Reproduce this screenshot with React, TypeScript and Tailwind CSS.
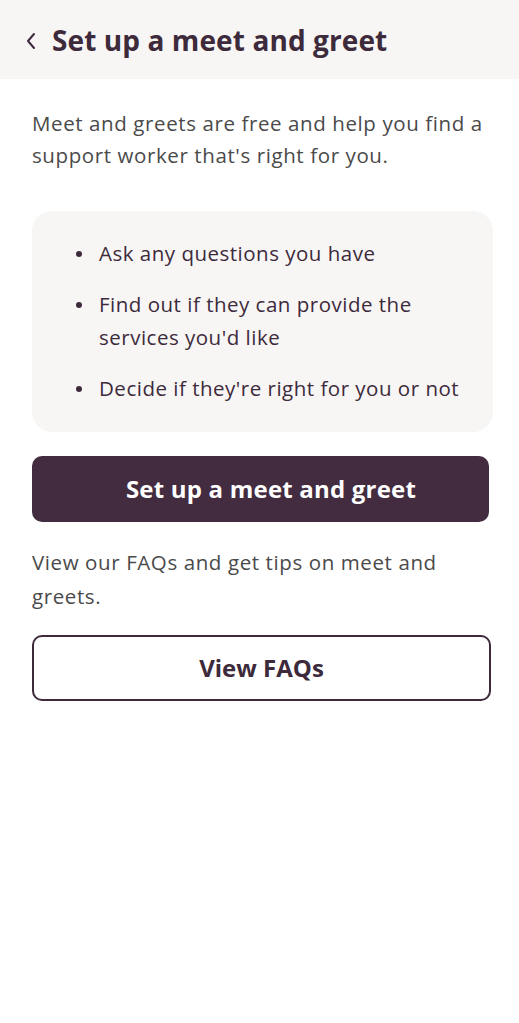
import React from 'react';

const bullets = [
  'Ask any questions you have',
  "Find out if they can provide the services you'd like",
  "Decide if they're right for you or not",
];

export default function App() {
  return (
    <div className="min-h-[1023px] bg-white font-['Open_Sans',sans-serif]">
      <div className="h-[79px] bg-[#f7f6f5] flex items-center pl-[24px] gap-[14px]">
        <svg width="14" height="20" viewBox="0 0 14 20" fill="none" className="mt-[2px]">
          <path d="M10 3 L4 10 L10 17" stroke="#3d2a3b" strokeWidth="2" strokeLinecap="round" strokeLinejoin="round" />
        </svg>
        <h1 className="text-[28px] font-bold text-[#3d2a3b] tracking-[0.1px]">Set up a meet and greet</h1>
      </div>

      <div className="px-[32px] pt-[28px]">
        <p className="text-[20.5px] leading-[32px] tracking-[0.6px] text-[#4a4a4a] w-[470px]">
          Meet and greets are free and help you find a support worker that's right for you.
        </p>

        <div className="mt-[40px] w-[461px] bg-[#f7f6f5] rounded-[20px] pl-[44px] pr-[20px] pt-[26px] pb-[27px]">
          <ul className="space-y-[18px]">
            {bullets.map((b) => (
              <li key={b} className="flex gap-[17px] text-[20.5px] leading-[33px] tracking-[0.5px] text-[#3d2a3b]">
                <span className="w-[6px] h-[6px] rounded-full bg-[#3d2a3b] shrink-0 mt-[14px]" />
                <span className="max-w-[365px]">{b}</span>
              </li>
            ))}
          </ul>
        </div>

        <button className="mt-[24px] w-[457px] h-[66px] rounded-[10px] bg-[#432c40] text-white text-[24px] font-bold tracking-[0.2px] pl-[21px]">
          Set up a meet and greet
        </button>

        <p className="mt-[23px] text-[20.5px] leading-[34px] tracking-[0.6px] text-[#4a4a4a] w-[440px]">
          View our FAQs and get tips on meet and greets.
        </p>

        <button className="mt-[22px] w-[459px] h-[66px] rounded-[10px] border-2 border-[#3d2a3b] text-[#3d2a3b] text-[24px] font-bold">
          View FAQs
        </button>
      </div>
    </div>
  );
}
